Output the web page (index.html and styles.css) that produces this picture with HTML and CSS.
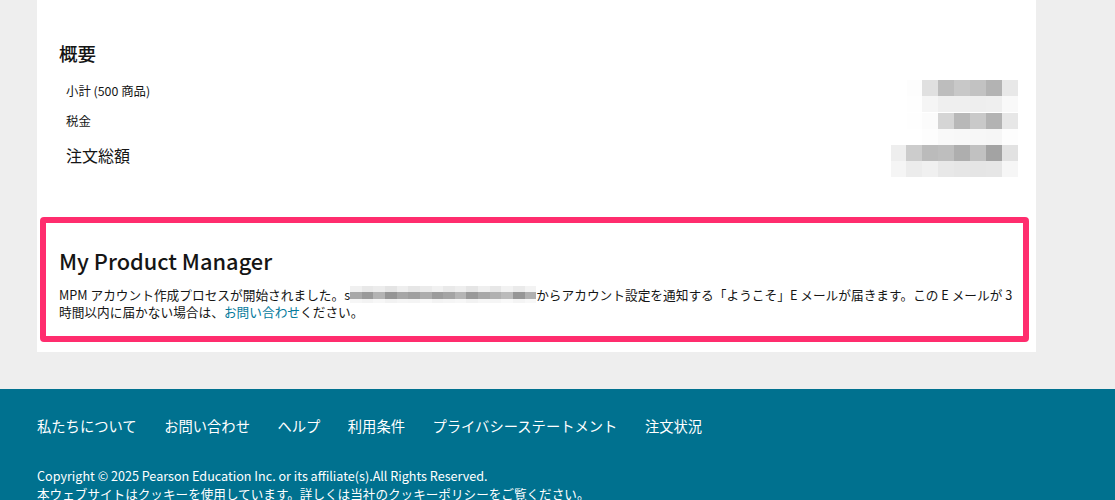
FILE: index.html
```html
<!DOCTYPE html>
<html lang="ja">
<head>
<meta charset="utf-8">
<title>概要</title>
<link rel="stylesheet" href="styles.css">
</head>
<body>
<main class="panel">
  <section class="summary">
    <h2 class="summary-title">概要</h2>
    <div class="row row-sub">
      <span class="label">小計 (500 商品)</span>
      <div class="pix">
        <div class="pix-row"><i style="background:#fdfdfd"></i><i style="background:#e0e0e0"></i><i style="background:#bdbdbd"></i><i style="background:#c8c8c8"></i><i style="background:#c2c2c2"></i><i style="background:#b3b3b3"></i><i style="background:#e8e8e8"></i></div>
        <div class="pix-row"><i style="background:#fefefe"></i><i style="background:#f5f5f5"></i><i style="background:#efefef"></i><i style="background:#efefef"></i><i style="background:#eeeeee"></i><i style="background:#efefef"></i><i style="background:#f9f9f9"></i></div>
      </div>
    </div>
    <div class="row row-tax">
      <span class="label">税金</span>
      <div class="pix">
        <div class="pix-row"><i style="background:#fefefe"></i><i style="background:#fbfbfb"></i><i style="background:#d5d5d5"></i><i style="background:#b8b8b8"></i><i style="background:#c9c9c9"></i><i style="background:#b3b3b3"></i><i style="background:#e7e7e7"></i></div>
        <div class="pix-row"><i style="background:#ffffff"></i><i style="background:#fdfdfd"></i><i style="background:#f9f9f9"></i><i style="background:#f8f8f8"></i><i style="background:#f7f7f7"></i><i style="background:#f6f6f6"></i><i style="background:#fdfdfd"></i></div>
      </div>
    </div>
    <div class="row row-total">
      <span class="label">注文総額</span>
      <div class="pix">
        <div class="pix-row"><i style="background:#eeeeee"></i><i style="background:#cccccc"></i><i style="background:#bbbbbb"></i><i style="background:#bebebe"></i><i style="background:#aeaeae"></i><i style="background:#c1c1c1"></i><i style="background:#a3a3a3"></i><i style="background:#e2e2e2"></i></div>
        <div class="pix-row"><i style="background:#f5f5f5"></i><i style="background:#ececec"></i><i style="background:#f0f0f0"></i><i style="background:#e8e8e8"></i><i style="background:#e6e6e6"></i><i style="background:#e5e5e5"></i><i style="background:#e6e6e6"></i><i style="background:#f6f6f6"></i></div>
      </div>
    </div>
  </section>

  <section class="mpm">
    <h2 class="mpm-title">My Product Manager</h2>
    <p class="mpm-text">MPM アカウント作成プロセスが開始されました。s<span class="email-blur"><span class="eb-row eb-top"><i style="background:#f0f0f0"></i><i style="background:#e8e8e8"></i><i style="background:#ececec"></i><i style="background:#e4e4e4"></i><i style="background:#eeeeee"></i><i style="background:#e6e6e6"></i><i style="background:#ebebeb"></i><i style="background:#f1f1f1"></i><i style="background:#e9e9e9"></i><i style="background:#eeeeee"></i><i style="background:#e5e5e5"></i><i style="background:#efefef"></i><i style="background:#e7e7e7"></i><i style="background:#f2f2f2"></i><i style="background:#eaeaea"></i><i style="background:#f3f3f3"></i></span><span class="eb-row eb-mid"><i style="background:#a9a9a9"></i><i style="background:#9a9a9a"></i><i style="background:#b3b3b3"></i><i style="background:#959595"></i><i style="background:#a6a6a6"></i><i style="background:#9f9f9f"></i><i style="background:#adadad"></i><i style="background:#9c9c9c"></i><i style="background:#a4a4a4"></i><i style="background:#b5b5b5"></i><i style="background:#999999"></i><i style="background:#a8a8a8"></i><i style="background:#b1b1b1"></i><i style="background:#bbbbbb"></i><i style="background:#969696"></i><i style="background:#b0b0b0"></i></span><span class="eb-row eb-bot"><i style="background:#f6f6f6"></i><i style="background:#f3f3f3"></i><i style="background:#f7f7f7"></i><i style="background:#f2f2f2"></i><i style="background:#f5f5f5"></i><i style="background:#f4f4f4"></i><i style="background:#f8f8f8"></i><i style="background:#f3f3f3"></i><i style="background:#f5f5f5"></i><i style="background:#f7f7f7"></i><i style="background:#f2f2f2"></i><i style="background:#f6f6f6"></i><i style="background:#f5f5f5"></i><i style="background:#f9f9f9"></i><i style="background:#f4f4f4"></i><i style="background:#f8f8f8"></i></span></span>からアカウント設定を通知する「ようこそ」E メールが届きます。この E メールが 3 時間以内に届かない場合は、<a class="link" href="#">お問い合わせ</a>ください。</p>
  </section>
</main>

<footer class="footer">
  <nav class="footer-nav">
    <a href="#">私たちについて</a>
    <a href="#">お問い合わせ</a>
    <a href="#">ヘルプ</a>
    <a href="#">利用条件</a>
    <a href="#">プライバシーステートメント</a>
    <a href="#">注文状況</a>
  </nav>
  <p class="copyright">Copyright © 2025 Pearson Education Inc. or its affiliate(s).All Rights Reserved.<br>本ウェブサイトはクッキーを使用しています。詳しくは当社のクッキーポリシーをご覧ください。</p>
</footer>
</body>
</html>
```

FILE: styles.css
```css
* { box-sizing: border-box; }

html, body {
  margin: 0;
  padding: 0;
}

body {
  background: #eeeeee;
  font-family: "Noto Sans CJK JP", "Noto Sans", sans-serif;
  color: #151515;
}

.panel {
  width: 999px;
  margin-left: 37px;
  background: #ffffff;
  padding: 0 7px 10px 3px;
  height: 352px;
}

.summary {
  padding: 37px 11px 0 19px;
  height: 217px;
}

.summary-title {
  margin: 0 0 11px 0;
  font-size: 18.5px;
  font-weight: 500;
  line-height: 32px;
}

.row {
  display: flex;
  justify-content: space-between;
  align-items: flex-start;
  padding-left: 7px;
  height: 32px;
}

.row-tax { margin-top: 1px; }
.row-total { margin-top: 0; }

.label {
  font-size: 12.4px;
  line-height: 18px;
}

.row-sub .label { margin-top: 2px; }
.row-tax .label { margin-top: -1px; }

.row-total .label {
  font-size: 16px;
  line-height: 22px;
  margin-top: -1px;
}

.pix {
  display: flex;
  flex-direction: column;
}

.pix-row {
  display: flex;
  justify-content: flex-end;
}

.pix-row i {
  display: block;
  width: 16px;
  height: 16px;
}

.pix-row i:first-child { width: 15px; }

.mpm {
  border: 6px solid #ff2d6e;
  border-radius: 4px;
  height: 125px;
  padding: 23px 4px 0 13px;
}

.mpm-title {
  margin: 0 0 10px 0;
  font-size: 21.8px;
  font-weight: 500;
  line-height: 30px;
}

.mpm-text {
  margin: 0;
  font-size: 12.7px;
  line-height: 17px;
}

.email-blur {
  display: inline-flex;
  flex-direction: column;
  vertical-align: top;
  width: 186px;
  height: 17px;
}

.eb-row {
  display: flex;
}

.eb-top { height: 6px; }
.eb-mid { height: 7px; }
.eb-bot { height: 4px; }

.eb-row i {
  flex: 1;
  display: block;
}

.link {
  color: #047a9c;
  text-decoration: none;
}

.footer {
  margin-top: 37px;
  background: #00718f;
  color: #ffffff;
  padding: 26px 37px 20px;
  height: 140px;
}

.footer-nav {
  display: flex;
  gap: 27.5px;
}

.footer-nav a {
  color: #ffffff;
  text-decoration: none;
  font-size: 14.3px;
  line-height: 22px;
}

.copyright {
  margin: 30px 0 0 0;
  font-size: 12.6px;
  line-height: 18px;
}
```
